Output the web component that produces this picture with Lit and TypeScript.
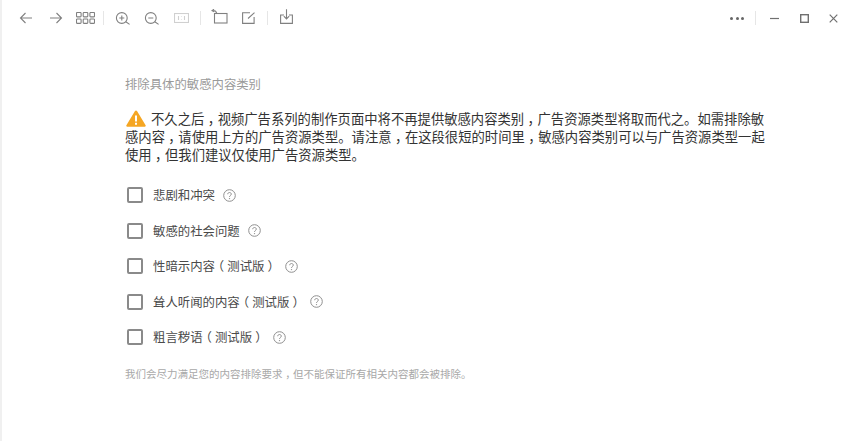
import { LitElement, html, css, svg } from "lit";
import { customElement } from "lit/decorators.js";

const wrap = (w: number, h: number, inner: unknown) => html`<svg width=${w} height=${h} viewBox="0 0 ${w} ${h}" fill="none" stroke="currentColor" stroke-width="1.1">${inner}</svg>`;

const icons = {
  back: wrap(14, 12, svg`<path d="M13 6H1.5M6.5 1L1.5 6l5 5"/>`),
  forward: wrap(14, 12, svg`<path d="M1 6h11.5M7.5 1l5 5-5 5"/>`),
  grid: wrap(19, 12, svg`<rect x=".5" y=".5" width="4.6" height="4.4" rx=".8"/><rect x="7.2" y=".5" width="4.6" height="4.4" rx=".8"/><rect x="13.9" y=".5" width="4.6" height="4.4" rx=".8"/><rect x=".5" y="7" width="4.6" height="4.4" rx=".8"/><rect x="7.2" y="7" width="4.6" height="4.4" rx=".8"/><rect x="13.9" y="7" width="4.6" height="4.4" rx=".8"/>`),
  zoomIn: wrap(16, 13, svg`<circle cx="6.8" cy="6" r="5.4"/><path d="M10.8 9.8l3.8 2.6M4.3 6h5M6.8 3.5v5"/>`),
  zoomOut: wrap(16, 13, svg`<circle cx="6.8" cy="6" r="5.4"/><path d="M10.8 9.8l3.8 2.6M4.3 6h5"/>`),
  oneToOne: wrap(15, 10, svg`<rect x=".5" y=".5" width="14" height="9"/><path d="M4.5 3v4M7.5 3.6v.4M7.5 6v.4M10.5 3v4" />`),
  rotate: wrap(17, 18, svg`<rect x="3.5" y="4.5" width="12.5" height="9.5"/><path d="M5.8 4.5C5.3 2.5 4.2 1.5 2.5 1.5M3 .2L1 1.7l2.2 1.1"/>`),
  edit: wrap(14, 12, svg`<path d="M8 .7H.6v10.7h11.5V5M6 6.5L12.5 .7"/>`),
  download: wrap(13, 18, svg`<path d="M4 6H.6v8.4h11.8V6H9M6.5 .2v9.6M3.8 7.2l2.7 2.7 2.7-2.7"/>`),
  min: wrap(9, 3, svg`<path d="M0 1.5h9" stroke-width="1.2"/>`),
  max: wrap(9, 9, svg`<rect x=".7" y=".7" width="7.6" height="7.6" stroke-width="1.4"/>`),
  close: wrap(9, 9, svg`<path d="M.7.7l7.6 7.6M8.3.7L.7 8.3" stroke-width="1.2"/>`),
};

const help = html`<svg class="help" width="13" height="13" viewBox="0 0 13 13"><circle cx="6.5" cy="6.5" r="5.8" fill="none" stroke="currentColor"/><path d="M4.7 5.2c0-1 .8-1.7 1.8-1.7s1.8.7 1.8 1.6c0 1.4-1.8 1.4-1.8 2.8" fill="none" stroke="currentColor"/><circle cx="6.5" cy="9.6" r=".7" fill="currentColor"/></svg>`;

const items = ["悲剧和冲突", "敏感的社会问题", "性暗示内容（测试版）", "耸人听闻的内容（测试版）", "粗言秽语（测试版）"];

// The reference centres commas and parentheses in their full-width cell.
const cjk = (text: string) =>
  text.split(/([，（）])/).map((part) =>
    /^[，（）]$/.test(part) ? html`<span class="pn">${part}</span>` : part
  );

@customElement("app-root")
export class AppRoot extends LitElement {
  static styles = css`
    :host {
      display: block;
      width: 866px;
      height: 441px;
      box-sizing: border-box;
      background: #fff;
      border-left: 2px solid #f0f0f0;
      font-family: "Noto Sans CJK SC", "Liberation Sans", sans-serif;
      overflow: hidden;
      font-kerning: none;
      text-spacing-trim: space-all;
    }
    .pn {
      display: inline-block;
      width: 1em;
      text-align: center;
      font-feature-settings: "halt";
    }
    .toolbar {
      display: flex;
      align-items: center;
      height: 36px;
      padding: 0 17.75px 0 9.25px;
      color: #808080;
    }
    .btn {
      width: 29.5px;
      height: 24px;
      display: flex;
      align-items: center;
      justify-content: center;
      flex: none;
    }
    .btn.dim { color: #d0d0d0; }
    .btn.win { color: #707070; }
    .sep {
      width: 1px;
      height: 14px;
      margin: 0 3.5px;
      background: #e6e6e6;
      flex: none;
    }
    .spacer { flex: 1; }
    .dots { display: flex; gap: 2.5px; }
    .dots i { width: 3px; height: 3px; border-radius: 50%; background: #666; }
    .content {
      padding: 40px 0 0 123px;
    }
    .heading {
      font-size: 12.36px;
      line-height: 16px;
      color: #9a9a9a;
    }
    .notice {
      margin-top: 18px;
      font-size: 13.33px;
      line-height: 18px;
      color: #333;
    }
    .line { white-space: nowrap; height: 18px; }
    .warn { vertical-align: -3px; margin: 0 5px 0 1px; }
    .list {
      display: flex;
      flex-direction: column;
      gap: 15.5px;
      margin-top: 21px;
    }
    .row {
      display: flex;
      align-items: center;
      height: 20px;
      padding-left: 2px;
      font-size: 12.4px;
      color: #4a4a4a;
    }
    .box {
      width: 16px;
      height: 16px;
      box-sizing: border-box;
      border: 2px solid #8a8a8a;
      border-radius: 2px;
      margin-right: 10px;
      flex: none;
    }
    .help { color: #8f8f8f; margin-left: 8px; flex: none; }
    .foot {
      margin-top: 19px;
      font-size: 10.5px;
      line-height: 16px;
      color: #a8a8a8;
    }
  `;

  render() {
    return html`
      <div class="toolbar">
        <span class="btn">${icons.back}</span>
        <span class="btn">${icons.forward}</span>
        <span class="btn">${icons.grid}</span>
        <span class="sep"></span>
        <span class="btn">${icons.zoomIn}</span>
        <span class="btn">${icons.zoomOut}</span>
        <span class="btn dim">${icons.oneToOne}</span>
        <span class="sep"></span>
        <span class="btn">${icons.rotate}</span>
        <span class="btn">${icons.edit}</span>
        <span class="sep"></span>
        <span class="btn">${icons.download}</span>
        <span class="spacer"></span>
        <span class="btn win"><span class="dots"><i></i><i></i><i></i></span></span>
        <span class="sep"></span>
        <span class="btn win">${icons.min}</span>
        <span class="btn win">${icons.max}</span>
        <span class="btn win">${icons.close}</span>
      </div>
      <div class="content">
        <div class="heading">排除具体的敏感内容类别</div>
        <div class="notice">
          <div class="line"><svg class="warn" width="20" height="17" viewBox="0 0 20 17"><path d="M10 .5a1.2 1.2 0 0 1 1 .6l8.6 14.2a1 1 0 0 1-.9 1.5H1.3a1 1 0 0 1-.9-1.5L9 1.1a1.2 1.2 0 0 1 1-.6z" fill="#f5a623"/><path d="M9 5.5h2v6H9zM9 12.7h2v2H9z" fill="#fff"/></svg>${cjk("不久之后，视频广告系列的制作页面中将不再提供敏感内容类别，广告资源类型将取而代之。如需排除敏")}</div>
          <div class="line">${cjk("感内容，请使用上方的广告资源类型。请注意，在这段很短的时间里，敏感内容类别可以与广告资源类型一起")}</div>
          <div class="line">${cjk("使用，但我们建议仅使用广告资源类型。")}</div>
        </div>
        <div class="list">
          ${items.map((t) => html`<div class="row"><span class="box"></span><span>${cjk(t)}</span>${help}</div>`)}
        </div>
        <div class="foot">${cjk("我们会尽力满足您的内容排除要求，但不能保证所有相关内容都会被排除。")}</div>
      </div>
    `;
  }
}
